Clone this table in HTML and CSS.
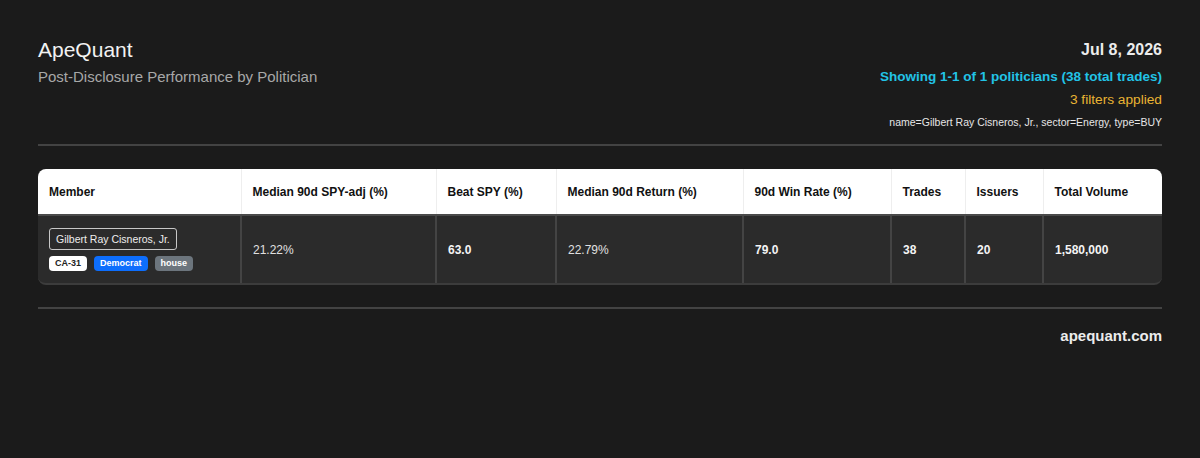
FILE: index.html
```html
<!DOCTYPE html>
<html>
<head>
<meta charset="utf-8">
<link rel="stylesheet" href="styles.css">
</head>
<body>
<div class="page">
  <header class="header">
    <div class="brand">
      <div class="title">ApeQuant</div>
      <div class="subtitle">Post-Disclosure Performance by Politician</div>
    </div>
    <div class="meta">
      <div class="date">Jul 8, 2026</div>
      <div class="showing">Showing 1-1 of 1 politicians (38 total trades)</div>
      <div class="filters">3 filters applied</div>
      <div class="filter-detail">name=Gilbert Ray Cisneros, Jr., sector=Energy, type=BUY</div>
    </div>
  </header>
  <hr class="divider">
  <div class="table-wrap">
    <table class="data">
      <colgroup>
        <col class="c1"><col class="c2"><col class="c3"><col class="c4"><col class="c5"><col class="c6"><col class="c7"><col class="c8">
      </colgroup>
      <thead>
        <tr>
          <th>Member</th>
          <th>Median 90d SPY-adj (%)</th>
          <th>Beat SPY (%)</th>
          <th>Median 90d Return (%)</th>
          <th>90d Win Rate (%)</th>
          <th>Trades</th>
          <th>Issuers</th>
          <th>Total Volume</th>
        </tr>
      </thead>
      <tbody>
        <tr>
          <td>
            <div class="name">Gilbert Ray Cisneros, Jr.</div>
            <div class="badges">
              <span class="badge b-light">CA-31</span>
              <span class="badge b-blue">Democrat</span>
              <span class="badge b-gray">house</span>
            </div>
          </td>
          <td>21.22%</td>
          <td class="bold">63.0</td>
          <td>22.79%</td>
          <td class="bold">79.0</td>
          <td class="bold">38</td>
          <td class="bold">20</td>
          <td class="bold">1,580,000</td>
        </tr>
      </tbody>
    </table>
  </div>
  <hr class="divider divider-bottom">
  <footer class="footer">apequant.com</footer>
</div>
</body>
</html>
```
FILE: styles.css
```css
* { box-sizing: border-box; }
html, body {
  margin: 0;
  padding: 0;
  background: #1b1b1b;
  font-family: "Liberation Sans", Arial, sans-serif;
  color: #eaeaea;
}
.page {
  padding: 37px 38px 0 38px;
}
.header {
  display: flex;
  justify-content: space-between;
  align-items: flex-start;
}
.title {
  font-size: 21px;
  color: #f2f2f2;
  line-height: 26px;
}
.subtitle {
  font-size: 15px;
  color: #a8a8a8;
  margin-top: 3px;
  line-height: 22px;
}
.meta {
  text-align: right;
}
.date {
  font-size: 16px;
  font-weight: bold;
  color: #ececec;
  line-height: 26px;
}
.showing {
  font-size: 13.5px;
  font-weight: bold;
  color: #22c3e6;
  line-height: 22px;
  margin-top: 3px;
}
.filters {
  font-size: 13.7px;
  color: #e9b433;
  line-height: 22px;
  margin-top: 1px;
}
.filter-detail {
  font-size: 10.5px;
  color: #e6e6e6;
  line-height: 20px;
  margin-top: 1px;
}
.divider {
  border: none;
  height: 2px;
  background: #434343;
  margin: 12px 0 0 0;
}
.table-wrap {
  margin-top: 23px;
  border-radius: 8px;
  overflow: hidden;
  background: #2b2b2b;
  border-bottom: 2px solid #3c3c3c;
}
.data {
  width: 100%;
  border-collapse: collapse;
  table-layout: fixed;
}
.c1 { width: 203px; }
.c2 { width: 195px; }
.c3 { width: 120px; }
.c4 { width: 187px; }
.c5 { width: 148px; }
.c6 { width: 74px; }
.c7 { width: 78px; }
.c8 { width: auto; }
.data th {
  background: #ffffff;
  color: #111;
  font-size: 12px;
  font-weight: bold;
  text-align: left;
  padding: 0 11px;
  height: 46px;
  border-left: 1px solid #eeeeee;
  border-bottom: 2px solid #4a4a4a;
}
.data th:first-child { border-left: none; }
.data td {
  color: #e0e0e0;
  font-size: 12px;
  text-align: left;
  padding: 0 11px;
  height: 68px;
  border-left: 2px solid #444;
  vertical-align: middle;
}
.data td:first-child { border-left: none; }
.data td.bold {
  font-weight: bold;
  color: #f4f4f4;
}
.name {
  display: inline-block;
  border: 1px solid #c8c8c8;
  border-radius: 3px;
  padding: 3px 6px;
  font-size: 10.5px;
  color: #eeeeee;
  line-height: 14px;
}
.badges {
  display: flex;
  gap: 7px;
  margin-top: 6px;
}
.badge {
  display: inline-block;
  font-size: 9px;
  font-weight: bold;
  line-height: 15px;
  padding: 0 6px;
  border-radius: 4px;
}
.b-light { background: #ffffff; color: #222; }
.b-blue { background: #0d6efd; color: #fff; }
.b-gray { background: #6c757d; color: #fff; }
.divider-bottom {
  margin-top: 22px;
}
.footer {
  text-align: right;
  font-size: 15px;
  font-weight: bold;
  color: #ececec;
  margin-top: 18px;
}
```
